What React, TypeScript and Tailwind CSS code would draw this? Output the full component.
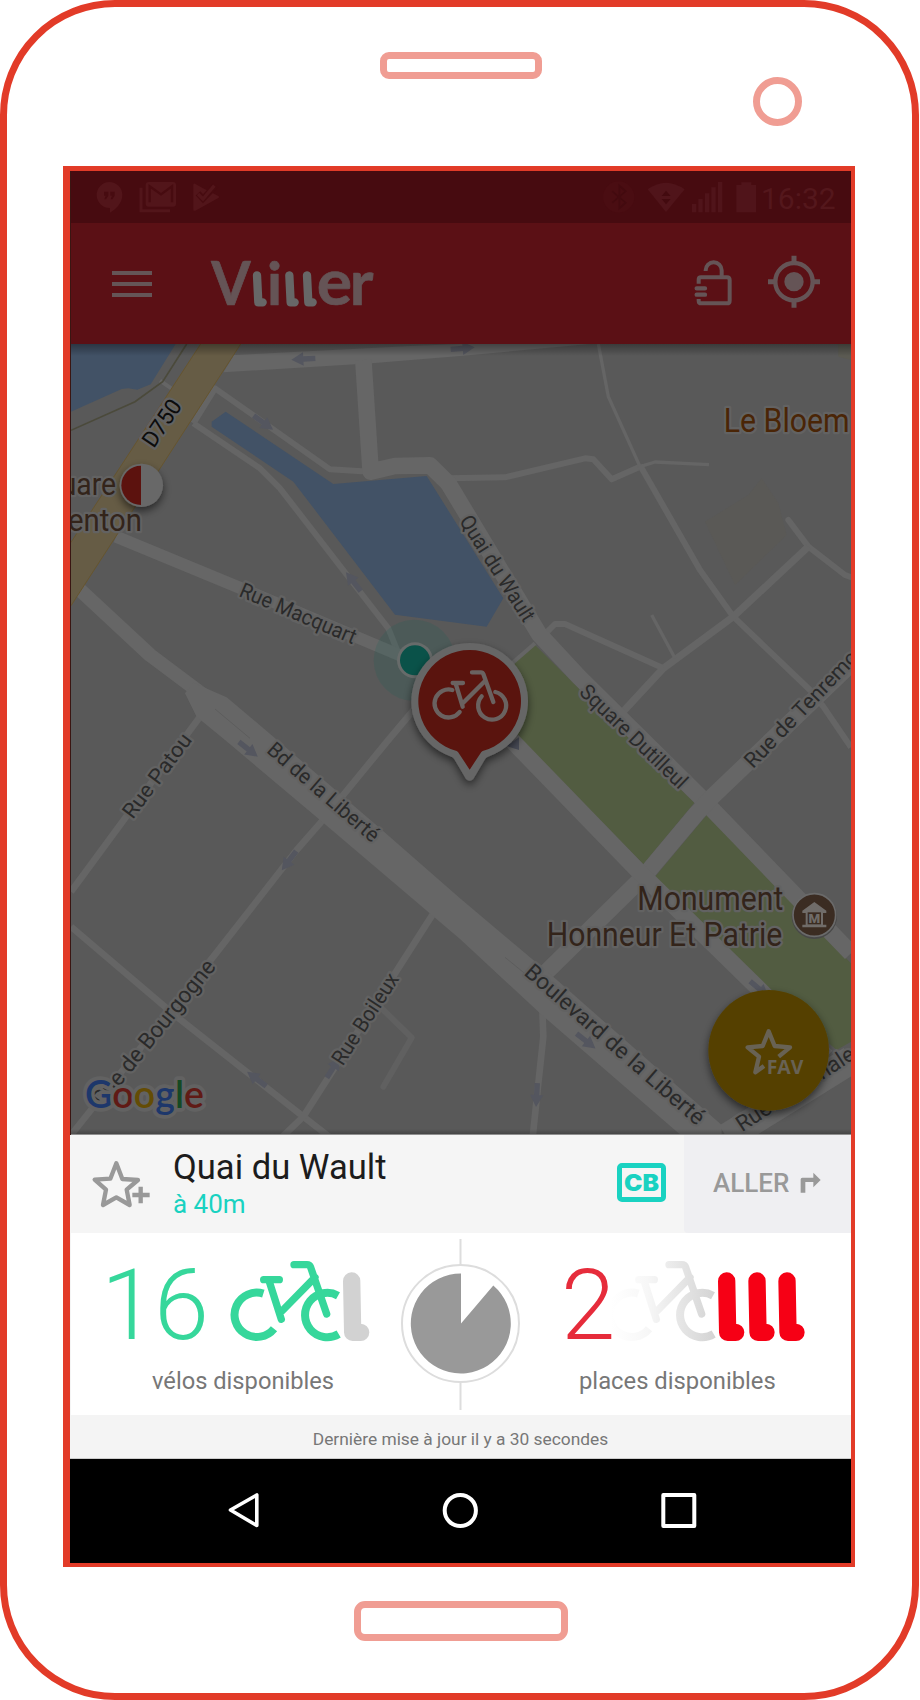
import React from "react";

function Arrow({ x, y, r }: { x: number; y: number; r: number }) {
  return (
    <path
      transform={`translate(${x} ${y}) rotate(${r})`}
      d="M-36,-8 H0 V-20 L36,0 L0,20 V8 H-36 Z"
      fill="#54565f"
    />
  );
}

type LabelProps = {
  x: number;
  y: number;
  r?: number;
  size?: number;
  len?: number;
  fill?: string;
  anchor?: "start" | "end";
  children: string;
};

function Label({ x, y, r = 0, size = 64, len, fill = "#2a2a2a", anchor = "start", children }: LabelProps) {
  return (
    <text
      transform={`translate(${x} ${y}) rotate(${r})`}
      fontSize={size}
      fill={fill}
      stroke="#626262"
      strokeWidth={14}
      strokeLinejoin="round"
      paintOrder="stroke"
      textAnchor={anchor}
      textLength={len}
      lengthAdjust="spacingAndGlyphs"
    >
      {children}
    </text>
  );
}

function Stand({ x, y = 453, color }: { x: number; y?: number; color: string }) {
  return (
    <path
      transform={`translate(${x} ${y})`}
      d="M0,0 L3,154 H27"
      fill="none"
      stroke={color}
      strokeWidth={52}
      strokeLinecap="round"
      strokeLinejoin="round"
    />
  );
}

function Bike({ stroke }: { stroke: string }) {
  return (
    <g fill="none" stroke={stroke} strokeWidth={22} strokeLinecap="round" strokeLinejoin="round">
      <path d="M611,449 H658 M627,452 L664,568 M666,543 L765,442 M702,404 H741 Q749,404 752,412 L800,552" />
      <g strokeWidth={24} strokeLinecap="butt">
        <path d="M610,491 A66.5,66.5 0 1 0 642,596" />
        <path d="M834,497 A66.5,66.5 0 1 0 836,612" />
      </g>
    </g>
  );
}

function StatusBar() {
  return (
    <div className="flex h-[52px] items-start justify-between bg-[#470b10] pl-[24px] pr-[15px]">
      <svg className="mt-[9px] h-[34px] w-[130px]" viewBox="285 540 390 102" fill="#52151a">
        <path d="M328,546 a39,39 0 0 1 39,39 c0,24 -20,44 -37,53 v-14 a39,39 0 0 1 -2,-78 Z" />
        <path d="M312,575 h13 v12 l-7,11 h-5 l4,-11 h-5 Z M331,575 h13 v12 l-7,11 h-5 l4,-11 h-5 Z" fill="#470b10" />
        <path d="M423,563 V632 H510" fill="none" stroke="#52151a" strokeWidth={9} />
        <rect x="437" y="546" width="91" height="74" rx="9" />
        <path d="M449,607 V559 L483,583 L516,559 V607" fill="none" stroke="#470b10" strokeWidth={7} />
        <path d="M580,553 Q581,549 585,551 L609,565 L655,588 Q660,591 655,594 L586,632 Q580,634 580,629 Z" />
        <path d="M594,580 L609,596 L648,556" fill="none" stroke="#470b10" strokeWidth={19} />
        <path d="M594,582 L609,597 L643,557" fill="none" stroke="#52151a" strokeWidth={10} />
      </svg>
      <div className="flex items-start">
        <svg className="mt-[10px] h-[33px] w-[156px]" viewBox="426 543 468 99" fill="#50141a">
          <circle cx="476" cy="591" r="47" fill="#4a0d12" />
          <path d="M457,574 L497,608 L478,625 V557 L497,574 L457,608" fill="none" stroke="#430a0f" strokeWidth={5} />
          <path d="M563,568 Q618,528 674,568 L618,636 Z" />
          <path d="M605,588 L618,572 L632,588 Z M605,597 H632 L618,613 Z" fill="#430a0f" />
          <path d="M696,612 h13 v25 h-13 Z M715,597 h13 v40 h-13 Z M735,580 h13 v57 h-13 Z M754,562 h13 v75 h-13 Z M774,546 h13 v91 h-13 Z M829,555 h15 v-8 h30 v8 h14 v82 h-59 Z" />
        </svg>
        <span className="ml-[3px] mt-[13px] w-[75px] text-[30px] leading-[30px] text-[#54171c]">16:32</span>
      </div>
    </div>
  );
}

function AppBar() {
  return (
    <div className="flex h-[121px] items-start bg-[#5b1015]">
      <div className="ml-[41px] mt-[48px] flex w-[39.5px] flex-col gap-[7px]">
        <span className="h-[4px] bg-[#655456]" />
        <span className="h-[4px] bg-[#655456]" />
        <span className="h-[4px] bg-[#655456]" />
      </div>
      <svg className="ml-[56.5px] mt-[32px] h-[54px] w-[170px] overflow-visible" viewBox="624 765 510 162">
        <g
          fontFamily="Lato, sans-serif"
          fontWeight={700}
          fill="#655456"
          stroke="#655456"
          strokeWidth={2}
          strokeLinejoin="round"
        >
          <text x="634" y="916" fontSize="186" textLength="118" lengthAdjust="spacingAndGlyphs">V</text>
          <text x="801" y="916" fontSize="178">i</text>
          <text x="950" y="916" fontSize="194" textLength="106" lengthAdjust="spacingAndGlyphs">e</text>
          <text x="1049" y="916" fontSize="190" textLength="71" lengthAdjust="spacingAndGlyphs">r</text>
        </g>
        <g fill="none" stroke="#676767" strokeWidth={25} strokeLinecap="round" strokeLinejoin="round">
          <path d="M771,826 L775,907 H788" />
          <path d="M868,826 L872,907 H884" />
          <path d="M921,826 L925,907 H938" />
        </g>
      </svg>
      <svg className="ml-auto mr-[30px] mt-[30px] h-[56px] w-[128px]" viewBox="700 759 384 168" fill="none" stroke="#655456">
        <path
          strokeWidth={12}
          d="M738,813 V811 a24,24 0 0 1 48,0 V830 M717,851 V839 q0,-7 7,-7 H802 q8,0 8,8 V902 q0,8 -8,8 H725 q-8,0 -8,-8 V897"
        />
        <path strokeWidth={13} strokeLinecap="round" d="M711,865 H736 M711,884 H736" />
        <circle cx="1003" cy="845" r="56" strokeWidth={13} />
        <circle cx="1003" cy="845" r="29" fill="#655456" stroke="none" />
        <path strokeWidth={15} d="M1003,767 V790 M1003,900 V923 M925,845 H948 M1058,845 H1081" />
      </svg>
    </div>
  );
}

function CityMap() {
  return (
    <svg
      className="block h-[791px] w-[780px] bg-[#595959]"
      viewBox="33 12 2340 2373"
      fontFamily="Roboto, sans-serif"
    >
      <defs>
        <linearGradient id="topShade" x1="0" y1="0" x2="0" y2="1">
          <stop offset="0" stopColor="#000" stopOpacity=".35" />
          <stop offset="1" stopColor="#000" stopOpacity="0" />
        </linearGradient>
        <linearGradient id="bottomShade" x1="0" y1="0" x2="0" y2="1">
          <stop offset="0" stopColor="#000" stopOpacity="0" />
          <stop offset="1" stopColor="#000" stopOpacity=".22" />
        </linearGradient>
        <filter id="drop" x="-30%" y="-30%" width="160%" height="170%">
          <feDropShadow dx="0" dy="12" stdDeviation="12" floodColor="#000" floodOpacity=".55" />
        </filter>
      </defs>

      {/* water, parks, built areas */}
      <path d="M33,12 H347 L272,133 L232,149 L205,145 L185,147 L33,215 Z" fill="#425266" />
      <path d="M455,245 L497,215 L820,432 L1100,408 L1330,775 L1280,860 L1005,824 L700,425 L455,260 Z" fill="#425266" />
      <path d="M1425,915 L1903,1388 L1750,1573 L1385,1200 L1340,1150 V990 Z" fill="#525c41" />
      <path d="M1940,1425 L2143,1635 L2373,1870 V2105 L2330,2130 L2120,1950 L1785,1610 Z" fill="#525c41" />
      <path d="M1935,545 L2065,465 L2105,415 L2155,490 L2180,585 L2025,735 Z" fill="#5a5956" />
      <path d="M2335,12 H2373 V60 L2335,50 Z" fill="#5b5a52" />

      {/* minor streets */}
      <g fill="none" stroke="#656565" strokeWidth={18} strokeLinejoin="round">
        <path d="M1165,415 L1335,412 L1575,355 L1600,358 L1655,418 L1740,380" />
        <path d="M1740,380 L1785,366 L1947,374" strokeWidth={10} />
        <path d="M1615,12 L1645,170 L1740,380" strokeWidth={10} />
        <path d="M1740,376 L1920,690 L2020,830 L2250,1050 L2290,1100 L2373,1222" />
        <path d="M2185,540 L2245,620 L2355,705 L2380,714" strokeLinecap="round" />
        <path d="M2245,620 L2020,830 L1810,985 L1680,1125" strokeWidth={22} />
        <path d="M1810,985 L1515,852 L1485,852 L1450,887" />
        <path d="M1775,825 L1845,955" strokeWidth={10} />
        <path d="M1350,975 L1425,910" strokeWidth={12} />
        <path d="M300,122 L335,146" strokeWidth={12} />
        <path d="M400,250 L465,145 L640,268 L810,388 L930,395" />
        <path d="M400,250 L600,385 L660,445 L950,820 L985,865 L1015,940" />
        <path d="M420,1130 L195,1435 L33,1655" strokeWidth={20} />
        <path d="M1090,1075 L985,1200 L780,1450 L710,1530 L460,1850 L33,2385" strokeWidth={20} />
        <path d="M33,1760 L350,2030 L730,2330 L810,2392" strokeWidth={20} />
        <path d="M1120,1720 L1005,1900 L730,2330 L665,2392" strokeWidth={20} />
        <path d="M970,2010 L1055,2093 L970,2240" stroke="#606060" strokeWidth={18} strokeLinecap="round" />
        <path d="M1447,2010 L1450,2090 L1435,2230 L1418,2392" strokeWidth={20} />
      </g>

      {/* main streets */}
      <g fill="none" stroke="#666666" strokeWidth={50} strokeLinejoin="round">
        <path d="M522,45 L1050,18 L1200,12 H1590 L1200,48 L935,70 L490,97 Z" fill="#666666" stroke="none" />
        <path d="M910,60 L932,395 L1005,378 L1110,376 L1165,430 L1437,882 L1556,1010 L1920,1370 L2373,1840" />
        <path d="M168,590 L560,752 L1030,950" strokeWidth={36} />
        <path d="M55,745 L270,945 L430,1065" strokeWidth={42} />
        <path d="M2380,965 L1955,1372 L1910,1420 L1755,1605 L1455,1900" />
        <path d="M1330,1175 L1735,1593 L2110,1960 L2300,2150" />
        <path d="M2000,2392 L2373,2160" strokeWidth={84} />
        <path
          stroke="none"
          fill="#666666"
          d="M400,1028 L500,1072 L640,1190 L960,1465 L1200,1675 L1485,1915 L1985,2355 V2392 H1870 L1440,2020 L1200,1797 L780,1440 L495,1200 L410,1130 L375,1060 Z"
        />
      </g>
      <path d="M465,1107 L570,1195 M1335,1852 L1400,1905" stroke="#5d5d5d" strokeWidth={3} />

      <path d="M422,12 H542 L33,797 V607 Z" fill="#665c45" />
      <path d="M422,12 L33,607 M542,12 L33,797" stroke="#66552f" strokeWidth={3} />
      <path d="M380,12 L308,125 L225,185 L33,271" fill="none" stroke="#4b4a3b" strokeWidth={5} />

      <Arrow x={730} y={57} r={177} />
      <Arrow x={1208} y={25} r={-5} />
      <Arrow x={610} y={248} r={36} />
      <Arrow x={880} y={725} r={232} />
      <Arrow x={565} y={1228} r={38} />
      <Arrow x={687} y={1562} r={127} />
      <Arrow x={590} y={2217} r={217} />
      <Arrow x={820} y={2183} r={-57} />
      <Arrow x={1578} y={2103} r={38} />
      <Arrow x={1430} y={2265} r={93} />
      <Arrow x={2098} y={1947} r={40} />
      <path d="M1340,1218 L1377,1192 V1230 Z" fill="#474a55" />

      <Label x={281} y={327} r={-56} size={68} len={156} fill="#0c0c0c">D750</Label>
      <Label x={534} y={767} r={23} len={374}>Rue Macquart</Label>
      <Label x={1196} y={543} r={57.5} len={364}>Quai du Wault</Label>
      <Label x={1555} y={1060} r={43.8} len={420}>Square Dutilleul</Label>
      <Label x={2079} y={1288} r={-46}>Rue de Tenremonde</Label>
      <Label x={218} y={1440} r={-53} len={300}>Rue Patou</Label>
      <Label x={617} y={1235} r={40.8} len={421}>Bd de la Liberté</Label>
      <Label x={1389} y={1902} r={41.2} size={68} len={693}>Boulevard de la Liberté</Label>
      <Label x={128} y={2303} r={-51} size={68} len={543}>Rue de Bourgogne</Label>
      <Label x={848} y={2180} r={-57} len={314}>Rue Boileux</Label>
      <Label x={2046} y={2377} r={-33} size={66}>Rue Nationale</Label>

      <Label x={1991} y={275} size={98} len={378} fill="#4a2506">Le Bloem</Label>
      <Label x={168} y={465} size={94} len={166} anchor="end" fill="#33241a">uare</Label>
      <Label x={246} y={573} size={94} len={222} anchor="end" fill="#33241a">enton</Label>
      <Label x={1732} y={1710} size={98} len={438} fill="#33241a">Monument</Label>
      <Label x={1460} y={1817} size={98} len={707} fill="#33241a">Honneur Et Patrie</Label>

      {/* monument marker */}
      <circle cx="2263" cy="1729" r="68" fill="#484848" />
      <circle cx="2263" cy="1725" r="64" fill="#3b2c22" stroke="#6a6a6a" strokeWidth={5} />
      <path d="M2227,1712 L2263,1686 L2299,1712 V1719 H2289 V1754 H2299 V1762 H2227 V1754 H2237 V1719 H2227 Z" fill="#706c69" />
      <rect x="2243" y="1717" width="40" height="36" fill="#3b2c22" />
      <text x="2263" y="1750" fontSize="40" fontWeight={900} fill="#706c69" textAnchor="middle">M</text>

      {/* half-full station */}
      <g filter="url(#drop)">
        <circle cx="244" cy="436" r="65" fill="#686868" />
      </g>
      <path d="M243,377 V495 A59,59 0 0 1 243,377 Z" fill="#5c120e" />

      {/* current position */}
      <circle cx="1063" cy="961" r="122" fill="#0f6457" fillOpacity=".16" />
      <circle cx="1065" cy="961" r="54" fill="#676b6a" />
      <circle cx="1065" cy="961" r="45" fill="#0a5249" />

      {/* selected station */}
      <g filter="url(#drop)">
        <path
          d="M1174,1250 A175,175 0 1 1 1284,1250 Q1278,1252 1274,1259 L1240,1317 Q1229,1328 1218,1317 L1184,1259 Q1180,1252 1174,1250 Z"
          fill="#666666"
        />
      </g>
      <path d="M1190,1233 A154,154 0 1 1 1268,1233 L1264,1236 L1229,1289 L1194,1236 Z" fill="#5a140e" />
      <g
        transform="translate(990 870)"
        fill="none"
        stroke="#6a6260"
        strokeWidth={13}
        strokeLinecap="round"
        strokeLinejoin="round"
      >
        <path d="M188,159 H219 M197,161 L218,230 M219,219 L285,153 M246,127 H273 Q278,127 280,132 L310,216" />
        <path d="M187,180 A42,42 0 1 0 209,246" />
        <path d="M275,199 A42,42 0 1 0 316,186" />
      </g>

      {/* favourites button */}
      <g filter="url(#drop)">
        <circle cx="2126" cy="2131" r="181" fill="#554100" />
      </g>
      <path
        d="M2112,2178 L2086,2197 L2097,2150 L2063,2122 L2108,2118 L2126,2074 L2144,2118 L2190,2122 L2156,2150"
        fill="none"
        stroke="#686254"
        strokeWidth={13}
        strokeLinejoin="round"
      />
      <text
        x="2120"
        y="2202"
        fontFamily="'Open Sans', sans-serif"
        fontWeight={700}
        fontSize="57"
        textLength="110"
        lengthAdjust="spacingAndGlyphs"
        fill="#686254"
      >
        FAV
      </text>

      <text
        x="75"
        y="2305"
        fontFamily="Lato, sans-serif"
        fontSize="114"
        textLength="357"
        lengthAdjust="spacingAndGlyphs"
        stroke="#626262"
        strokeWidth={22}
        strokeLinejoin="round"
        paintOrder="stroke"
        fontWeight={600}
      >
        <tspan fill="#1d376b">G</tspan>
        <tspan fill="#601a15">o</tspan>
        <tspan fill="#644c05">o</tspan>
        <tspan fill="#1d376b">g</tspan>
        <tspan fill="#154923">l</tspan>
        <tspan fill="#601a15">e</tspan>
      </text>

      <rect x="33" y="12" width="2340" height="36" fill="url(#topShade)" />
      <rect x="33" y="2367" width="2340" height="15" fill="url(#bottomShade)" />
      <rect x="33" y="2382" width="2340" height="3" fill="#8f8f8f" />
    </svg>
  );
}

function StationHeader() {
  return (
    <div className="flex h-[98px] bg-[#f5f5f5]">
      <svg className="ml-[20px] mt-[23px] h-[54px] w-[64px]" viewBox="94 84 192 162" fill="none" stroke="#999999">
        <path
          strokeWidth={13}
          strokeLinejoin="round"
          d="M170,100 L188,147 L235,150 L201,179 L210,225 L170,202 L130,225 L139,179 L105,149 L152,146 Z"
        />
        <path strokeWidth={24} stroke="#f5f5f5" d="M243,168 V222 M216,195 H272" />
        <path strokeWidth={13} d="M243,170 V220 M218,195 H270" />
      </svg>
      <div className="ml-[18px] flex flex-col">
        <span className="mt-[13px] text-[34.6px] leading-[38px] text-[#1c1c1c]">Quai du Wault</span>
        <span className="mt-px text-[26px] leading-[34px] text-[#19d2c1]">à 40m</span>
      </div>
      <svg className="ml-auto mr-[18px] mt-[28px] h-[39px] w-[49px]" viewBox="0 0 49 39">
        <rect x="2.5" y="2.5" width="44" height="34" rx="2.5" fill="none" stroke="#19d2c1" strokeWidth={5} />
        <text
          x="7"
          y="28"
          fontFamily="Inter, sans-serif"
          fontWeight={900}
          fontSize="23"
          textLength="35"
          lengthAdjust="spacingAndGlyphs"
          fill="#19d2c1"
        >
          CB
        </text>
      </svg>
      <div className="flex w-[167px] rounded-bl-[4px] bg-[#efeff2] pl-[29px] pt-[33px]">
        <span className="text-[26px] font-medium leading-[30px] text-[#999999]">ALLER</span>
        <svg className="ml-[11px] mt-[4px] h-[21px] w-[21px]" viewBox="1020 125 63 63" fill="#999999">
          <path d="M1022,187 V147 Q1022,142 1027,142 H1060 V127 L1082,149 L1060,171 V155 H1036 V187 Z" />
        </svg>
      </div>
    </div>
  );
}

function Availability() {
  return (
    <div className="flex h-[182px] bg-white">
      <div className="flex w-[319px] flex-col">
        <div className="ml-[30px] mt-[22px] flex h-[88px]">
          <span className="w-[127px] shrink-0 pt-px text-[99px] font-light leading-[99px] tracking-[-2px] text-[#36d79b]">
            16
          </span>
          <svg className="mt-[4px] h-[84px] w-[142px] shrink-0" viewBox="504 387 426 252">
            <Bike stroke="#36d79b" />
            <Stand x={875} color="#d2d2d2" />
          </svg>
        </div>
        <span className="ml-[81px] mt-[23px] text-[23.7px] leading-[30px] text-[#777777]">vélos disponibles</span>
      </div>
      <svg className="h-[182px] w-[142px]" viewBox="390 1233 142 182">
        <path d="M460.5,1239 V1410" stroke="#dddddd" strokeWidth={2} />
        <circle cx="460.5" cy="1323.5" r="58.5" fill="#ffffff" stroke="#dddddd" strokeWidth={2} />
        <path d="M461,1323.5 L493.3,1285.5 A50,50 0 1 1 461,1273.5 Z" fill="#999999" />
      </svg>
      <div className="flex flex-1 flex-col">
        <div className="ml-[28px] mt-[22px] flex h-[88px]">
          <span className="w-[52px] pl-px pt-px text-[98px] font-light leading-[99px] text-[#e62c3b]">2</span>
          <svg className="mt-[4px] h-[84px] w-[197px]" viewBox="456 387 591 252">
            <defs>
              <linearGradient id="fade" gradientUnits="userSpaceOnUse" x1="530" y1="0" x2="836" y2="0">
                <stop offset="0" stopColor="#ffffff" />
                <stop offset=".35" stopColor="#f7f7f7" />
                <stop offset="1" stopColor="#d4d4d4" />
              </linearGradient>
            </defs>
            <g transform="translate(-75 0)">
              <Bike stroke="url(#fade)" />
            </g>
            <Stand x={800} color="#f60015" />
            <Stand x={891} color="#f60015" />
            <Stand x={981} color="#f60015" />
          </svg>
        </div>
        <span className="ml-[47px] mt-[23px] text-[23.8px] leading-[30px] text-[#777777]">places disponibles</span>
      </div>
    </div>
  );
}

function NavBar() {
  return (
    <div className="flex h-[104px] items-start bg-black pt-[31px]">
      <svg className="ml-[156px] h-[40px] w-[36px]" viewBox="226 1490 36 40" fill="none" stroke="#fff" strokeWidth={3.6} strokeLinejoin="round">
        <path d="M256.8,1495 V1525.5 L230.5,1510 Z" />
      </svg>
      <svg className="ml-[178px] h-[40px] w-[40px]" viewBox="440 1490 40 40" fill="none" stroke="#fff" strokeWidth={4}>
        <circle cx="460.3" cy="1510.5" r="15.6" />
      </svg>
      <svg className="ml-[179px] h-[40px] w-[40px]" viewBox="660 1490 40 40" fill="none" stroke="#fff" strokeWidth={4} strokeLinejoin="round">
        <rect x="664.3" y="1495" width="31" height="31" />
      </svg>
    </div>
  );
}

export default function App() {
  return (
    <div className="h-[1700px] w-[920px] bg-white font-['Roboto',sans-serif]">
      <div className="relative flex h-[1700px] w-[919px] flex-col rounded-[115px] border-[7px] border-[#e23b28]">
        <div className="ml-[373px] mt-[45px] h-[27px] w-[162px] shrink-0 rounded-[9px] border-[7px] border-[#f09d93]" />
        <div className="absolute left-[746px] top-[70px] h-[49px] w-[49px] rounded-full border-[7px] border-[#f09d93]" />
        <div className="ml-[56px] mt-[87px] flex h-[1401px] w-[792px] shrink-0 flex-col border-b-4 border-l-[7px] border-r-4 border-t-[5px] border-[#e23b28]">
          <div className="bg-[#3a1512] pl-px">
            <StatusBar />
            <AppBar />
            <CityMap />
          </div>
          <div className="bg-[#f5f5f5] pl-px">
            <StationHeader />
            <Availability />
          </div>
          <div className="flex h-[44px] justify-center border-b border-[#cccccc] bg-[#f4f4f4] pt-[13px] text-[17.35px] leading-[22px] text-[#777777]">
            Dernière mise à jour il y a 30 secondes
          </div>
          <NavBar />
        </div>
        <div className="ml-[347px] mt-[34px] h-[40px] w-[214px] shrink-0 rounded-[11px] border-[7px] border-[#f09d93]" />
      </div>
    </div>
  );
}
